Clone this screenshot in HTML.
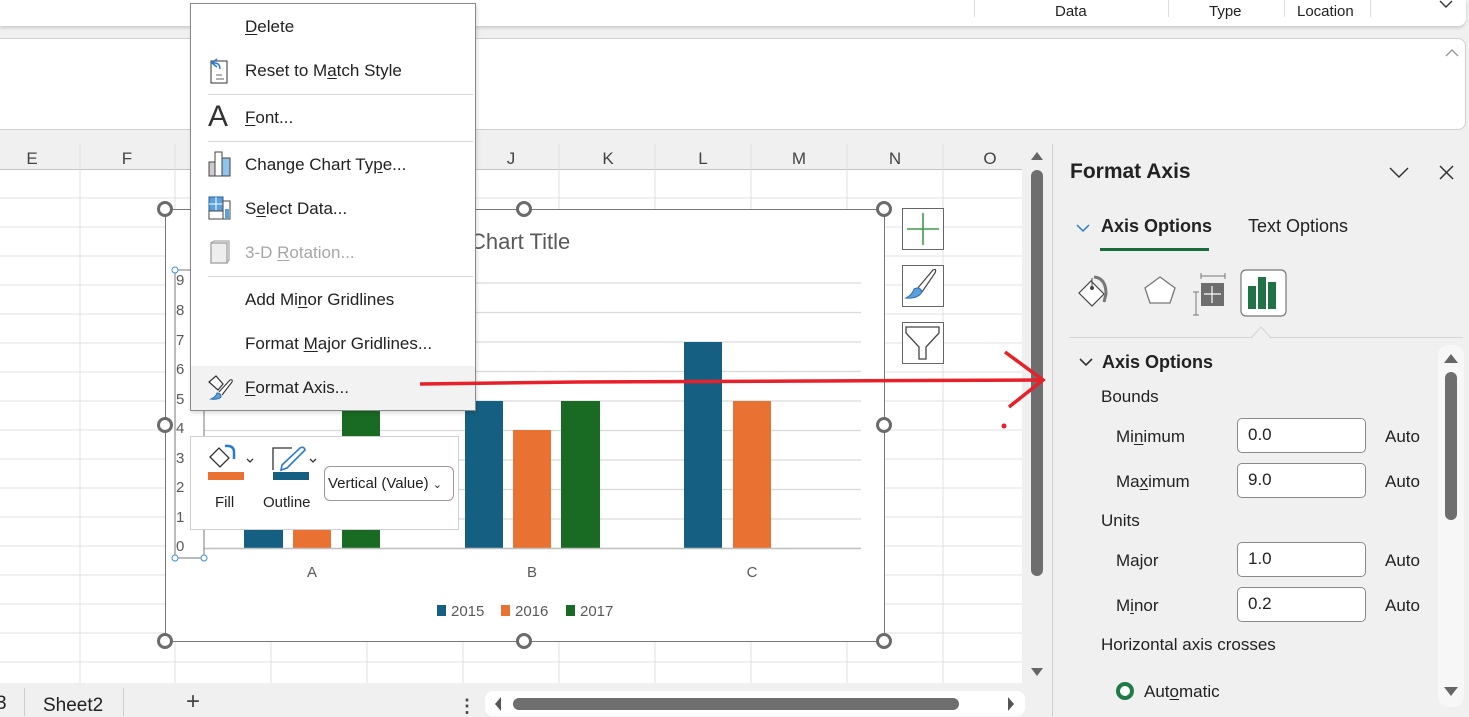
<!DOCTYPE html>
<html><head><meta charset="utf-8"><style>
*{box-sizing:border-box;margin:0;padding:0}
body{width:1469px;height:716px;overflow:hidden;background:#f0f0f0;font-family:"Liberation Sans",sans-serif;position:relative;color:#222}
.abs{position:absolute}
.mi{position:absolute;left:245px;font-size:17px;color:#222;line-height:20px}
u{text-decoration:underline;text-underline-offset:2px}
.sep{position:absolute;left:208px;width:265px;height:1px;background:#d6d6d6}
.lbl{position:absolute;font-size:17px;color:#222}
.inp{position:absolute;left:1237px;width:129px;height:35px;border:1px solid #8a8a8a;border-radius:5px;background:#fff;font-size:17px;padding:6px 0 0 10px;color:#222}
.auto{position:absolute;left:1385px;font-size:17px}
.ax{position:absolute;left:176px;font-size:15px;color:#595959;font-family:"Liberation Sans Narrow","Liberation Sans",sans-serif}
.h{position:absolute;width:16px;height:16px;border:3px solid #6b6b6b;border-radius:50%;background:#fff}
</style></head><body>
<div class="abs" style="left:0;top:0;width:1466px;height:26px;background:#fff;border-radius:0 0 8px 0;box-shadow:0 2px 3px #ccc"></div>
<div class="abs" style="left:974px;top:0;width:1px;height:17px;background:#ddd"></div>
<div class="abs" style="left:1168px;top:0;width:1px;height:17px;background:#ddd"></div>
<div class="abs" style="left:1284px;top:0;width:1px;height:17px;background:#ddd"></div>
<div class="abs" style="left:1370px;top:0;width:1px;height:17px;background:#ddd"></div>
<div class="abs" style="left:1055px;top:3px;font-size:15px">Data</div>
<div class="abs" style="left:1209px;top:3px;font-size:15px">Type</div>
<div class="abs" style="left:1297px;top:3px;font-size:15px">Location</div>
<svg class="abs" style="left:1438px;top:0" width="16" height="10"><path d="M2 1 L8 7 L14 1" fill="none" stroke="#333" stroke-width="1.4"/></svg>
<div class="abs" style="left:-10px;top:38px;width:1476px;height:92px;background:#fff;border:1px solid #d0d0d0;border-radius:8px"></div>
<svg class="abs" style="left:1444px;top:47px" width="16" height="10"><path d="M2 9 L8 3 L14 9" fill="none" stroke="#999" stroke-width="1.4"/></svg>
<div class="abs" style="left:0;top:144px;width:1022px;height:26px;background:#f0f0f0;border-bottom:1px solid #c4c4c4"></div>
<div class="abs" style="left:0;top:170px;width:1022px;height:513px;background:#fff"></div>
<svg class="abs" style="left:0;top:144px" width="1022" height="539">
<g stroke="#e1e1e1" stroke-width="1">
<line x1="80" y1="0" x2="80" y2="539"/><line x1="175" y1="0" x2="175" y2="539"/><line x1="271" y1="0" x2="271" y2="539"/><line x1="367" y1="0" x2="367" y2="539"/><line x1="463" y1="0" x2="463" y2="539"/><line x1="559" y1="0" x2="559" y2="539"/><line x1="655" y1="0" x2="655" y2="539"/><line x1="751" y1="0" x2="751" y2="539"/><line x1="847" y1="0" x2="847" y2="539"/><line x1="943" y1="0" x2="943" y2="539"/>
<line x1="0" y1="54" x2="1022" y2="54"/><line x1="0" y1="83" x2="1022" y2="83"/><line x1="0" y1="112" x2="1022" y2="112"/><line x1="0" y1="141" x2="1022" y2="141"/><line x1="0" y1="170" x2="1022" y2="170"/><line x1="0" y1="199" x2="1022" y2="199"/><line x1="0" y1="228" x2="1022" y2="228"/><line x1="0" y1="257" x2="1022" y2="257"/><line x1="0" y1="286" x2="1022" y2="286"/><line x1="0" y1="315" x2="1022" y2="315"/><line x1="0" y1="344" x2="1022" y2="344"/><line x1="0" y1="373" x2="1022" y2="373"/><line x1="0" y1="402" x2="1022" y2="402"/><line x1="0" y1="431" x2="1022" y2="431"/><line x1="0" y1="460" x2="1022" y2="460"/><line x1="0" y1="489" x2="1022" y2="489"/><line x1="0" y1="518" x2="1022" y2="518"/>
</g>
<g font-family="Liberation Sans" font-size="17" fill="#444" text-anchor="middle">
<text x="32" y="20">E</text><text x="127" y="20">F</text><text x="511" y="20">J</text><text x="608" y="20">K</text><text x="703" y="20">L</text><text x="799" y="20">M</text><text x="895" y="20">N</text><text x="990" y="20">O</text></g>
</svg>
<div class="abs" style="left:1024px;top:144px;width:26px;height:539px;background:#f0f0f0"></div>
<svg class="abs" style="left:1024px;top:146px" width="26" height="540"><path d="M7 14 L13 6 L19 14Z" fill="#666"/><rect x="7" y="24" width="12" height="406" rx="6" fill="#6e6e6e"/><path d="M7 522 L13 530 L19 522Z" fill="#666"/></svg>
<div class="abs" style="left:1052px;top:144px;width:1px;height:572px;background:#d0d0d0"></div>
<div class="abs" style="left:0;top:683px;width:1022px;height:33px;background:#f0f0f0"></div>
<div class="abs" style="left:-4px;top:693px;font-size:19px">3</div>
<div class="abs" style="left:24px;top:688px;width:1px;height:28px;background:#ccc"></div>
<div class="abs" style="left:43px;top:695px;font-size:19px">Sheet2</div>
<div class="abs" style="left:123px;top:688px;width:1px;height:28px;background:#ccc"></div>
<div class="abs" style="left:186px;top:688px;font-size:24px;color:#444">+</div>
<div class="abs" style="left:458px;top:696px;font-size:18px;color:#444;font-weight:bold">⋮</div>
<div class="abs" style="left:485px;top:691px;width:540px;height:25px;background:#fff;border-radius:8px"></div>
<svg class="abs" style="left:485px;top:691px" width="540" height="25"><path d="M16 6 L10 13 L16 20Z" fill="#555"/><rect x="28" y="7" width="446" height="12" rx="6" fill="#6e6e6e"/><path d="M523 6 L529 13 L523 20Z" fill="#555"/></svg>
<div class="abs" style="left:165px;top:209px;width:720px;height:433px;background:#fff;border:1.5px solid #777"></div>
<svg class="abs" style="left:165px;top:209px" width="720" height="433">
<g stroke="#d9d9d9" stroke-width="1.3"><line x1="39" y1="74" x2="696" y2="74"/><line x1="39" y1="103.5" x2="696" y2="103.5"/><line x1="39" y1="133" x2="696" y2="133"/><line x1="39" y1="162.5" x2="696" y2="162.5"/><line x1="39" y1="192" x2="696" y2="192"/><line x1="39" y1="221.5" x2="696" y2="221.5"/><line x1="39" y1="251" x2="696" y2="251"/><line x1="39" y1="280.5" x2="696" y2="280.5"/><line x1="39" y1="310" x2="696" y2="310"/><line x1="39" y1="339.5" x2="696" y2="339.5"/></g>
<rect x="79" y="251" width="39" height="88" fill="#156082"/><rect x="128" y="280" width="38" height="59" fill="#e97132"/><rect x="177" y="192" width="38" height="147" fill="#196b24"/>
<rect x="300" y="192" width="38" height="147" fill="#156082"/><rect x="348" y="221" width="38" height="118" fill="#e97132"/><rect x="396" y="192" width="39" height="147" fill="#196b24"/>
<rect x="519" y="133" width="38" height="206" fill="#156082"/><rect x="568" y="192" width="38" height="147" fill="#e97132"/>
<line x1="39" y1="339.5" x2="696" y2="339.5" stroke="#bfbfbf" stroke-width="1.5"/>
<g font-family="Liberation Sans" font-size="15" fill="#595959" text-anchor="middle"><text x="147" y="368">A</text><text x="367" y="368">B</text><text x="587" y="368">C</text></g>
<text x="305" y="40" font-family="Liberation Sans" font-size="22" fill="#595959">Chart Title</text>
<rect x="272" y="396" width="9" height="11" fill="#156082"/><text x="286" y="407" font-family="Liberation Sans" font-size="15" fill="#595959">2015</text>
<rect x="336" y="396" width="9" height="11" fill="#e97132"/><text x="350" y="407" font-family="Liberation Sans" font-size="15" fill="#595959">2016</text>
<rect x="401" y="396" width="9" height="11" fill="#196b24"/><text x="415" y="407" font-family="Liberation Sans" font-size="15" fill="#595959">2017</text>
<rect x="10" y="61" width="29" height="288" fill="none" stroke="#777" stroke-width="1"/>
<g fill="#fff" stroke="#3a8ee0" stroke-width="1"><circle cx="10" cy="61" r="3"/><circle cx="10" cy="349" r="3"/><circle cx="39" cy="349" r="3"/></g>
</svg>
<div class="ax" style="top:272px">9</div><div class="ax" style="top:302px">8</div><div class="ax" style="top:332px">7</div><div class="ax" style="top:361px">6</div><div class="ax" style="top:391px">5</div><div class="ax" style="top:420px">4</div><div class="ax" style="top:450px">3</div><div class="ax" style="top:479px">2</div><div class="ax" style="top:509px">1</div><div class="ax" style="top:538px">0</div>
<div class="h" style="left:157px;top:201px"></div><div class="h" style="left:516px;top:201px"></div><div class="h" style="left:876px;top:201px"></div>
<div class="h" style="left:157px;top:417px"></div><div class="h" style="left:876px;top:417px"></div>
<div class="h" style="left:157px;top:633px"></div><div class="h" style="left:516px;top:633px"></div><div class="h" style="left:876px;top:633px"></div>
<div class="abs" style="left:902px;top:208px;width:42px;height:42px;border:1.5px solid #666;background:#fff"></div>
<svg class="abs" style="left:902px;top:208px" width="42" height="42"><path d="M21 5 V37 M5 21 H37" stroke="#3c9c4c" stroke-width="1.6"/></svg>
<div class="abs" style="left:902px;top:265px;width:42px;height:42px;border:1.5px solid #666;background:#fff"></div>
<svg class="abs" style="left:902px;top:265px" width="42" height="42"><path d="M15 24 L31 5 Q35 3 33 8 L20 27Z" fill="#fff" stroke="#444" stroke-width="1.2"/><path d="M12 24 Q18 21 20 27 Q16 34 4 33 Q10 30 12 24Z" fill="#5aa0dc" stroke="#2a6db0" stroke-width="1"/></svg>
<div class="abs" style="left:902px;top:322px;width:42px;height:42px;border:1.5px solid #666;background:#fff"></div>
<svg class="abs" style="left:902px;top:322px" width="42" height="42"><path d="M4 5 H37 V11 L24 25 V37 H17 V25 L4 11Z" fill="#fff" stroke="#444" stroke-width="1.3"/></svg>
<div class="abs" style="left:190px;top:436px;width:269px;height:94px;background:#fff;border:1px solid #d0d0d0"></div>
<svg class="abs" style="left:205px;top:443px" width="60" height="40"><path d="M5 14 L14 5 L24 15 L15 24Z" fill="#fff" stroke="#333" stroke-width="1.3"/><path d="M20 3 Q28 2 29 8 L29 16" fill="none" stroke="#2a7ad0" stroke-width="2.5"/><rect x="3" y="29" width="36" height="8" fill="#e97132"/><path d="M42 16 L45 19 L48 16" fill="none" stroke="#333" stroke-width="1.3"/></svg>
<div class="abs" style="left:215px;top:494px;font-size:15px">Fill</div>
<svg class="abs" style="left:270px;top:443px" width="60" height="40"><path d="M3 27 V5 H22" fill="none" stroke="#333" stroke-width="1.3"/><path d="M12 22 L30 5 Q34 3 35 7 L17 25 L11 27Z" fill="#fff" stroke="#2a7ad0" stroke-width="1.6"/><rect x="3" y="29" width="36" height="8" fill="#156082"/><path d="M40 16 L43 19 L46 16" fill="none" stroke="#333" stroke-width="1.3"/></svg>
<div class="abs" style="left:263px;top:494px;font-size:15px">Outline</div>
<div class="abs" style="left:324px;top:466px;width:130px;height:35px;border:1px solid #999;border-radius:6px;background:#fff;font-size:15px;padding:8px 0 0 3px;color:#1f1f1f">Vertical (Value) <span style="font-size:11px">⌄</span></div>
<div class="abs" style="left:190px;top:3px;width:286px;height:408px;background:#fff;border:1px solid #8a8a8a;box-shadow:1px 2px 4px rgba(0,0,0,.15)"></div>
<div class="abs" style="left:191px;top:366px;width:284px;height:44px;background:#f2f2f2"></div>
<div class="mi" style="top:17px"><u>D</u>elete</div>
<svg class="abs" style="left:208px;top:57px" width="24" height="28"><rect x="3" y="4" width="16" height="22" fill="#fff" stroke="#444" stroke-width="1.1"/><path d="M9 2 L4 6 L9 10 M4 6 Q12 5 12 12" fill="none" stroke="#2a7ad0" stroke-width="1.5"/><path d="M8 18 H14 M8 22 H16" stroke="#666"/></svg>
<div class="mi" style="top:61px">Reset to M<u>a</u>tch Style</div>
<div class="sep" style="top:94px"></div>
<div class="abs" style="left:208px;top:100px;font-size:30px;color:#333;font-family:'Liberation Sans'">A</div>
<div class="mi" style="top:108px"><u>F</u>ont...</div>
<div class="sep" style="top:141px"></div>
<svg class="abs" style="left:208px;top:150px" width="26" height="28"><rect x="1" y="12" width="6" height="14" fill="#ccc" stroke="#444"/><rect x="7" y="2" width="7" height="24" fill="#fff" stroke="#444"/><rect x="14" y="8" width="8" height="18" fill="#8ec3ee" stroke="#444"/></svg>
<div class="mi" style="top:155px">Change Chart Ty<u>p</u>e...</div>
<svg class="abs" style="left:208px;top:196px" width="26" height="26"><rect x="1" y="1" width="14" height="14" fill="#5aa0dc" stroke="#1f5f9f"/><path d="M1 8 H15 M8 1 V15" stroke="#fff"/><rect x="1" y="15" width="14" height="8" fill="#fff" stroke="#444"/><rect x="15" y="5" width="7" height="18" fill="#fff" stroke="#444"/><rect x="17" y="13" width="4" height="10" fill="#5aa0dc"/></svg>
<div class="mi" style="top:199px">S<u>e</u>lect Data...</div>
<svg class="abs" style="left:208px;top:240px" width="24" height="26"><rect x="3" y="3" width="16" height="20" fill="#eee" stroke="#aaa" stroke-width="1.5"/><path d="M3 3 L6 1 H21 V20 L19 23" fill="none" stroke="#aaa" stroke-width="1.3"/></svg>
<div class="mi" style="top:243px;color:#a6a6a6">3-D <u>R</u>otation...</div>
<div class="sep" style="top:276px"></div>
<div class="mi" style="top:290px">Add Mi<u>n</u>or Gridlines</div>
<div class="mi" style="top:334px">Format <u>M</u>ajor Gridlines...</div>
<svg class="abs" style="left:206px;top:374px" width="28" height="28"><path d="M3 8 L10 2 L17 10 L12 16Z" fill="#fff" stroke="#333" stroke-width="1.2"/><path d="M13 18 L24 6 Q27 5 26 8 L16 21" fill="#fff" stroke="#333" stroke-width="1.1"/><path d="M11 19 Q15 19 15 23 Q12 26 5 25 Q10 23 11 19Z" fill="#5aa0dc" stroke="#2a6db0"/></svg>
<div class="mi" style="top:378px"><u>F</u>ormat Axis...</div>
<div class="abs" style="left:1070px;top:160px;font-size:21px;font-weight:bold;color:#222">Format Axis</div>
<svg class="abs" style="left:1388px;top:164px" width="70" height="18"><path d="M2 4 L11 13 L20 4" fill="none" stroke="#333" stroke-width="1.5"/><path d="M52 2 L65 15 M65 2 L52 15" stroke="#333" stroke-width="1.5"/></svg>
<svg class="abs" style="left:1075px;top:222px" width="16" height="12"><path d="M2 3 L8 9 L14 3" fill="none" stroke="#2a7ad0" stroke-width="1.5"/></svg>
<div class="abs" style="left:1101px;top:216px;font-size:18px;font-weight:bold;color:#222">Axis Options</div>
<div class="abs" style="left:1100px;top:248px;width:109px;height:3px;background:#196b3a"></div>
<div class="abs" style="left:1248px;top:216px;font-size:18px;color:#222">Text Options</div>
<svg class="abs" style="left:1075px;top:268px" width="220" height="52">
<path d="M4 25 L16 13 L29 26 L17 38Z" fill="#fff" stroke="#444" stroke-width="1.2"/><path d="M17 10 V20" stroke="#444"/><circle cx="17" cy="20" r="2" fill="#444"/><path d="M19 9 Q31 10 31 26 L29 34" fill="none" stroke="#777" stroke-width="3"/>
<path d="M85 9 L100 20 L95 35 L75 35 L70 20Z" fill="#fff" stroke="#777" stroke-width="1.3"/>
<path d="M118 24 H124 M121 24 V47 M118 47 H124" stroke="#777" stroke-width="1"/><path d="M126 5 V11 M150 5 V11 M126 8 H150" stroke="#777"/><rect x="126" y="15" width="23" height="23" fill="#6e6e6e"/><path d="M137 18 V35 M129 26 H146" stroke="#fff" stroke-width="1.2"/>
<rect x="166" y="2" width="45" height="46" rx="5" fill="#fff" stroke="#777" stroke-width="1.2"/>
<rect x="173" y="18" width="8" height="23" fill="#217346"/><rect x="183" y="9" width="8" height="32" fill="#217346"/><rect x="193" y="14" width="8" height="27" fill="#217346"/>
</svg>
<div class="abs" style="left:1069px;top:337px;width:394px;height:1px;background:#d4d4d4"></div>
<svg class="abs" style="left:1250px;top:324px" width="22" height="15"><path d="M1 14 L11 3 L21 14" fill="#f0f0f0" stroke="#d4d4d4"/></svg>
<svg class="abs" style="left:1078px;top:356px" width="16" height="12"><path d="M2 3 L8 9 L14 3" fill="none" stroke="#333" stroke-width="1.6"/></svg>
<div class="abs" style="left:1102px;top:352px;font-size:18px;font-weight:bold;color:#222">Axis Options</div>
<div class="lbl" style="left:1101px;top:387px">Bounds</div>
<div class="lbl" style="left:1116px;top:427px">Mi<u>n</u>imum</div><div class="inp" style="top:418px">0.0</div><div class="auto" style="top:427px">Auto</div>
<div class="lbl" style="left:1116px;top:472px">Ma<u>x</u>imum</div><div class="inp" style="top:463px">9.0</div><div class="auto" style="top:472px">Auto</div>
<div class="lbl" style="left:1101px;top:511px">Units</div>
<div class="lbl" style="left:1116px;top:551px">Ma<u>j</u>or</div><div class="inp" style="top:542px">1.0</div><div class="auto" style="top:551px">Auto</div>
<div class="lbl" style="left:1116px;top:596px">M<u>i</u>nor</div><div class="inp" style="top:587px">0.2</div><div class="auto" style="top:596px">Auto</div>
<div class="lbl" style="left:1101px;top:635px">Horizontal axis crosses</div>
<div class="abs" style="left:1116px;top:682px;width:18px;height:18px;border:4.5px solid #1e7b45;border-radius:50%;background:#fff"></div>
<div class="lbl" style="left:1144px;top:682px">Aut<u>o</u>matic</div>
<div class="abs" style="left:1438px;top:345px;width:26px;height:362px;background:#f7f7f7;border-radius:10px"></div>
<svg class="abs" style="left:1438px;top:345px" width="26" height="362"><path d="M6 18 L13 9 L20 18Z" fill="#666"/><rect x="7" y="27" width="12" height="148" rx="6" fill="#6e6e6e"/><path d="M6 342 L13 351 L20 342Z" fill="#666"/></svg>
<svg class="abs" style="left:0;top:0" width="1469" height="716"><path d="M420 384 L578 382 L1043 380" fill="none" stroke="#e8202a" stroke-width="3.5"/><path d="M1005 352 L1043 380 L1009 407" fill="none" stroke="#e8202a" stroke-width="3.5"/><circle cx="1004" cy="426" r="2.5" fill="#e8202a"/></svg>
</body></html>
